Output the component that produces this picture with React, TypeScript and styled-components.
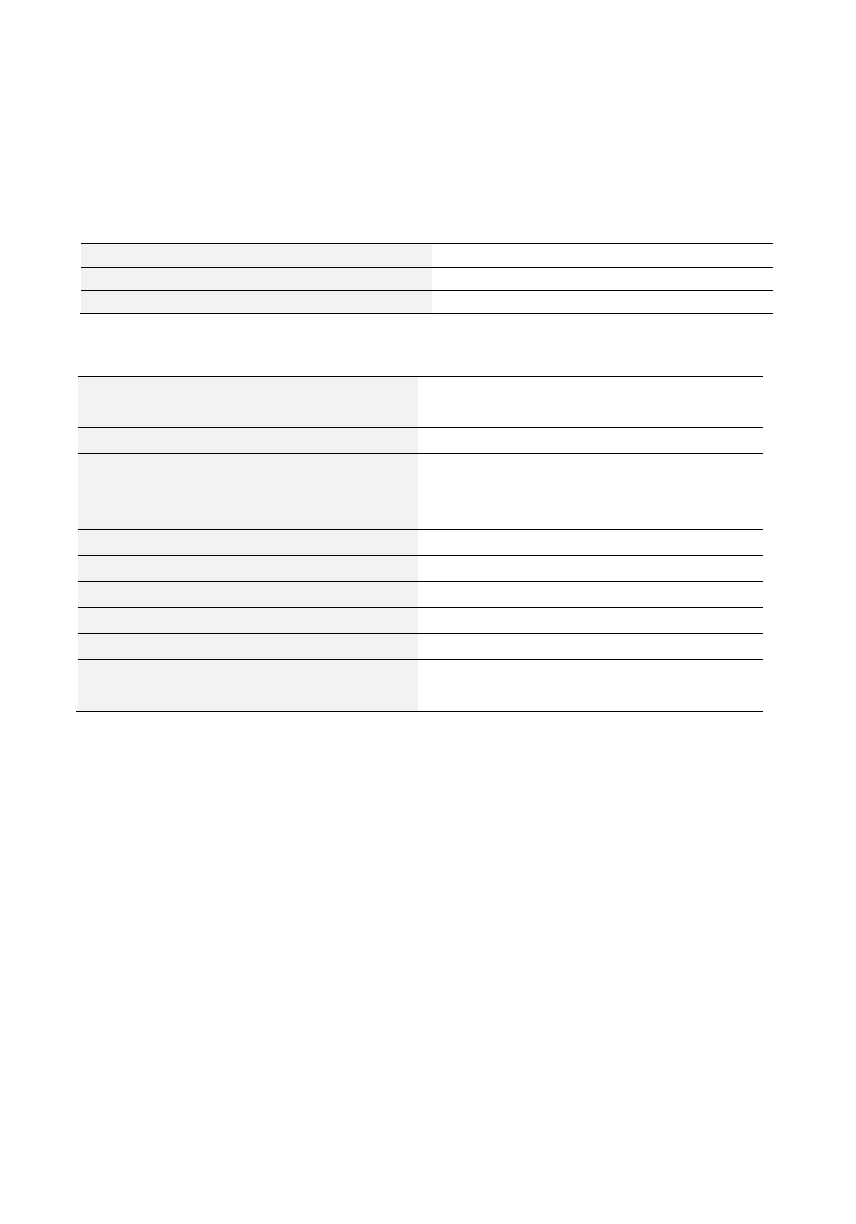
import React from 'react';
import styled, { createGlobalStyle } from 'styled-components';

const GlobalStyle = createGlobalStyle`
	html, body {
		margin: 0;
		padding: 0;
		background: #fff;
		font-family: 'Liberation Sans', Arial, sans-serif;
	}
`;

interface TableProps {
	left: number;
	width: number;
	top: number;
	inset: number;
}

interface GridProps {
	labelWidth: number;
}

interface RowProps {
	height: number;
}

const Page = styled.div`
	display: flex;
	flex-direction: column;
	width: 856px;
	min-height: 1224px;
`;

const Table = styled.div<TableProps>`
	margin-top: ${(p) => p.top}px;
	margin-left: ${(p) => p.left}px;
	width: ${(p) => p.width}px;
	padding-left: ${(p) => p.inset}px;
	border-bottom: 1px solid #000;
	box-sizing: border-box;
`;

const Row = styled.div<GridProps & RowProps>`
	display: grid;
	grid-template-columns: ${(p) => p.labelWidth}px 1fr;
	height: ${(p) => p.height}px;
	border-top: 1px solid #000;
`;

const LabelCell = styled.div`
	background: #f2f2f2;
`;

const ValueCell = styled.div`
	background: #fff;
`;

const firstRows = [23, 22, 22];
const secondRows = [50, 25, 75, 25, 25, 25, 25, 25, 51];

export default function App() {
	return (
		<Page>
			<GlobalStyle />
			<Table top={243} left={80} width={693} inset={1}>
				{firstRows.map((h, i) => (
					<Row key={i} height={h} labelWidth={351}>
						<LabelCell />
						<ValueCell />
					</Row>
				))}
			</Table>
			<Table top={62} left={76} width={687} inset={2}>
				{secondRows.map((h, i) => (
					<Row key={i} height={h} labelWidth={340}>
						<LabelCell />
						<ValueCell />
					</Row>
				))}
			</Table>
		</Page>
	);
}
